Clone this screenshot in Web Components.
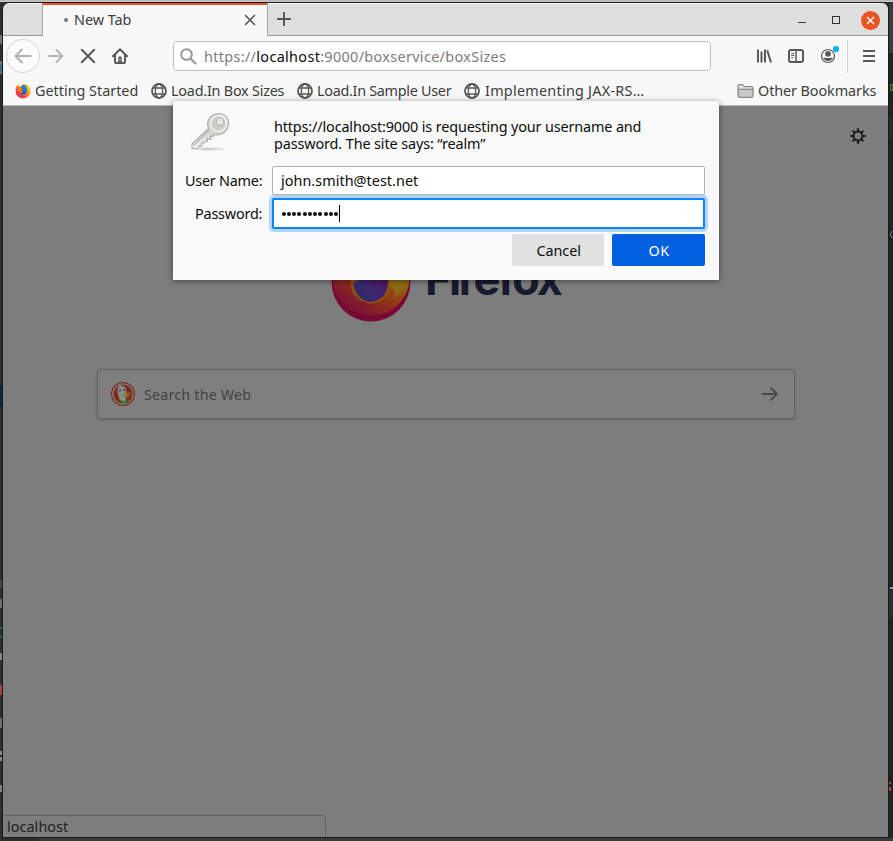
<!DOCTYPE html>
<html lang="en">
<head>
<meta charset="utf-8">
<title>New Tab</title>
<style>
html,body{margin:0;width:893px;height:841px;overflow:hidden;background:#2b2c2d}
body{font-family:"Noto Sans","Open Sans",sans-serif;font-size:14.4px;color:#3c3c3d}
</style>
</head>
<body>
<desktop-backdrop></desktop-backdrop>
<browser-window></browser-window>
<script>
function define(name, html, setup) {
  const tpl = document.createElement('template');
  tpl.innerHTML = html;
  customElements.define(name, class extends HTMLElement {
    constructor() { super(); this.attachShadow({mode: 'open'}).append(tpl.content.cloneNode(true)); }
    connectedCallback() { if (setup) setup(this, this.shadowRoot); }
  });
}

/* A single line of text whose tracking is tuned so it fills the width in "w". */
define('fit-text', `<style>:host{display:block;white-space:nowrap;line-height:20px;flex:none}span{display:inline-block}</style><span><slot></slot></span>`,
(el, root) => {
  const w = parseFloat(el.getAttribute('w')), span = root.querySelector('span');
  el.style.width = w + 'px';
  const n = el.textContent.length;
  span.style.letterSpacing = '0px';
  span.style.letterSpacing = ((w + .3 - span.getBoundingClientRect().width) / n) + 'px';
});

const ICONS = {
  back: [34,34,`<circle cx="17" cy="17" r="16.5" fill="#fbfbfb" stroke="#d3d3d3"/><path d="M24.5 17H10M16 10.500L9.500 17l6.500 6.500" stroke="#b1b1b1" stroke-width="2" fill="none" stroke-linecap="round" stroke-linejoin="round"/>`],
  forward: [16,16,`<path d="M1 8h13.500M8.500 2l6 6-6 6" stroke="#b3b3b3" stroke-width="2" fill="none" stroke-linecap="round" stroke-linejoin="round"/>`],
  stop: [16,16,`<path d="M1.800 1.800l12.400 12.400M14.200 1.800L1.800 14.200" stroke="#58585a" stroke-width="2" stroke-linecap="round"/>`],
  home: [16,16,`<path d="M1 8.300L8 1.300l7 7M3 7.500V14a1 1 0 0 0 1 1h8a1 1 0 0 0 1-1V7.500" stroke="#58585a" stroke-width="2" fill="none" stroke-linecap="round" stroke-linejoin="round"/><path d="M6.300 15V9.500a1 1 0 0 1 1-1h1.400a1 1 0 0 1 1 1V15z" fill="#58585a"/><rect x="7.500" y="11" width="1" height="1.300" fill="#fff"/>`],
  search: [17,17,`<circle cx="6.500" cy="6.500" r="5.300" stroke="#999" stroke-width="2" fill="none"/><path d="M10.500 10.500l5 5" stroke="#999" stroke-width="2.200" stroke-linecap="round"/>`],
  close: [12,12,`<path d="M1.500 1.500l9 9M10.500 1.500l-9 9" stroke="#58585a" stroke-width="1.700" stroke-linecap="round"/>`],
  plus: [14,14,`<path d="M7 .7v12.600M.7 7h12.600" stroke="#555" stroke-width="1.900" stroke-linecap="round"/>`],
  library: [16,16,`<path d="M2 1.500v13M5.500 3.500v11M9 1.500v13M11.200 2.200l3.800 12.300" stroke="#58585a" stroke-width="2" fill="none"/>`],
  sidebar: [16,16,`<rect x="1" y="2" width="14" height="12" rx="2" stroke="#58585a" stroke-width="2" fill="none"/><path d="M8 2v12" stroke="#58585a" stroke-width="1.500"/><path d="M3.300 5.500h3M3.300 7.500h3M3.300 9.500h2" stroke="#58585a"/>`],
  account: [22,20,`<circle cx="8" cy="11" r="6.500" stroke="#58585a" stroke-width="1.200" fill="none"/><circle cx="8" cy="8.800" r="2.900" fill="#58585a"/><path d="M3.300 12.200Q8 14 12.700 12.200Q12 15.700 8 16Q4 15.700 3.300 12.200z" fill="#58585a"/><circle cx="16" cy="4" r="3.100" fill="#00b3f4"/>`],
  menu: [12,12,`<path d="M0 1h12M0 6h12M0 11h12" stroke="#58585a" stroke-width="1.800"/>`],
  folder: [17,14,`<path d="M1 12.500V1.700Q1 .7 2 .7h4l1.500 2H15q1 0 1 1v8.800q0 .8-1 .8H2q-1 0-1-.8zM1 5.200h15" fill="#c9c9c9" stroke="#737373"/><path d="M2 2.200h4M2 4h13" stroke="#ededed"/>`],
  globe: [16,16,`<g fill="none" stroke="#58585a"><circle cx="8" cy="8" r="7" stroke-width="1.800"/><ellipse cx="8" cy="8" rx="3.700" ry="7" stroke-width="1.300"/><path d="M2 5h12M2 11h12" stroke-width="1.300"/></g>`],
  gear: [16,16,`<circle cx="8" cy="8" r="4.400" stroke="#1c1c1e" stroke-width="2" fill="none"/><path d="M8 .3v3.200M8 12.500v3.200M.3 8h3.200M12.500 8h3.200M2.600 2.600l2 2M11.400 11.400l2 2M13.400 2.600l-2 2M2.600 13.400l2-2" stroke="#1c1c1e" stroke-width="2"/>`],
  go: [16,16,`<path d="M0 8h14.500M8.500 1.500L15 8l-6.500 6.500" stroke="#484848" stroke-width="1.900" fill="none"/>`],
  foxmini: [16,16,`<defs><linearGradient id="m" x1=".9" y1="0" x2=".1" y2="1"><stop offset="0" stop-color="#fff13d"/><stop offset=".4" stop-color="#ff9a16"/><stop offset=".75" stop-color="#ff3647"/><stop offset="1" stop-color="#e31587"/></linearGradient></defs><path d="M.5 7Q.8 3.500 2.700 1.500L4 3.300Q5 2.700 6.200 3L8 .7Q14.500.5 15.500 7.500 15.500 15 8 15.500.8 15 .5 7z" fill="url(#m)"/><path d="M6 3.500Q8 .9 10.500 2.500 12.800 5 12 8.500 10.500 12.500 6.800 11.500 3.500 10 4.300 6.500L6.500 6z" fill="#0a84e0"/><path d="M4 5.700q3-1 4.800.7L7.500 8q1.500 1.800 4 .3-1 3-4.500 2.800Q3.800 10 4 5.700z" fill="#20439b"/><path d="M3.200 4l3.300 1.200 2 1-1.800 1.200q0 2 2.300 2-4 1.500-5.500-1.400z" fill="#ff7b1b"/>`],
  firefox: [80,80,`<defs><linearGradient id="f" x1=".85" y1=".1" x2=".2" y2=".95"><stop offset="0" stop-color="#8a7b16"/><stop offset=".35" stop-color="#96580f"/><stop offset=".65" stop-color="#8c2c1c"/><stop offset="1" stop-color="#780d3b"/></linearGradient><linearGradient id="p" x1="0" y1="1" x2="1" y2=".3"><stop offset="0" stop-color="#2b2565"/><stop offset=".55" stop-color="#392a70"/><stop offset="1" stop-color="#4c1668"/></linearGradient></defs><circle cx="40" cy="40" r="39.500" fill="#780936"/><path d="M1 33Q3 62 27 71q27 8 43-12Q79 49 78.500 33L60 5H18z" fill="url(#f)"/><path d="M20 38q-2 20 20 23.500Q60 61 60 38z" fill="#91500f"/><path d="M59 38h16q-1 10-11 16 2-8-6-10z" fill="#8c6c13"/><path d="M22 42Q27 37 32 38h25q0 20-17 22-14-1-18-18z" fill="url(#p)"/>`],
  duck: [26,26,`<circle cx="13" cy="13" r="12" fill="#77271a"/><circle cx="13" cy="13" r="10.200" fill="#7a2b1c" stroke="#878080" stroke-width="1.200"/><path d="M8 6q4-3 7 .5 2 2 1.500 6l-1 9q-3 1-4.500 0Q8 15 7.500 11z" fill="#898989"/><path d="M14 11.500q4.500 1.500 7-.5-.5 3-4.500 3l3.500 1.200q-3.500 2-6 .5z" fill="#8b7814"/><path d="M10.500 19l4.500 1.500 3.500-1.500v3.500l-3.500-1-4.500 1z" fill="#2b7525"/><circle cx="10" cy="9.500" r=".9" fill="#333a58"/><circle cx="14.300" cy="9" r=".9" fill="#333a58"/>`],
  key: [42,42,`<defs><linearGradient id="k" x1="1" y1="0" x2="0" y2="1"><stop offset="0" stop-color="#f0f0ee"/><stop offset=".5" stop-color="#d5d5d0"/><stop offset="1" stop-color="#f2f2f0"/></linearGradient><radialGradient id="s"><stop offset="0" stop-color="#bbb"/><stop offset="1" stop-color="#bbb" stop-opacity="0"/></radialGradient></defs><ellipse cx="18" cy="37" rx="19" ry="2" fill="url(#s)"/><path d="M2 36.500V32L18.500 16.500Q16 9 21 4.500 26 .5 32 2q7 2.500 6.500 10-1 8-7.500 10-4 1.500-8 .5l.5 2-3-.5.5 3.500-4-1 .5 3-3 .5-2.500 1.500-.5 3-3-.2-.5 2z" fill="url(#k)" stroke="#a8a8a4" stroke-width="1.100" stroke-linejoin="round"/><path d="M3.500 33.500L19.500 18" stroke="#999" stroke-width="1"/><circle cx="28.500" cy="11.500" r="7.800" fill="#cfcfca" stroke="#fff" stroke-width="1"/><path d="M23 8l8 9M25 6l8 9M22 12l6 6" stroke="#bcbcb8" stroke-width=".8"/><circle cx="30" cy="9.500" r="3.600" fill="#fbfbfb" stroke="#b3b3b0" stroke-width="1.200"/><circle cx="30" cy="9.500" r="1.700" fill="#eee" stroke="#bbb" stroke-width=".6"/>`]
};
define('ui-icon', `<style>:host{display:block;flex:none;line-height:0}svg{display:block}</style><div></div>`, (el, root) => {
  const [w, h, body] = ICONS[el.getAttribute('name')];
  root.querySelector('div').innerHTML = `<svg width="${w}" height="${h}" viewBox="0 0 ${w} ${h}">${body}</svg>`;
});

/* Slivers of the editor window that show behind the browser. */
define('desktop-backdrop', `<style>
:host{position:absolute;inset:0;background:linear-gradient(#b9b9b9 0 1px,#c7c7c7 1px 2px,#2c2e30 2px)}
i{position:absolute;display:block}
.l{left:0;width:3px}.r{left:889px;width:4px}
</style>
<i class="r" style="top:4px;height:837px;background:#222424"></i>
<i class="r" style="top:4px;height:49px;background:#3a3b3c"></i>
<i class="r" style="top:80px;height:20px;background:#1b2623"></i>
<i class="r" style="top:118px;height:22px;background:#2a2b2c"></i>
<i class="r" style="top:590px;height:27px;background:#2c2f31"></i>
<i style="left:890px;width:3px;top:587px;height:2px;background:#8fa0ac"></i>
<i style="left:890px;width:3px;top:84px;height:7px;border:1px solid #56773c;box-sizing:border-box"></i>
<i style="left:890px;width:4px;top:231px;height:7px;border:1px solid #687a92;border-radius:3px 0 0 3px;box-sizing:border-box"></i>
<i style="left:889px;width:2px;top:782px;height:2px;background:#a64840"></i>
<i style="left:889px;width:2px;top:787px;height:4px;background:#a64840"></i>
<i class="l" style="top:35px;height:9px;background:#77736c"></i>
<i class="l" style="top:61px;height:13px;background:#6f7070"></i>
<i class="l" style="top:65px;height:7px;background:#347089"></i>
<i class="l" style="top:385px;height:22px;background:#0b263d"></i>
<i class="l" style="top:580px;height:8px;background:#484848"></i>
<i class="l" style="top:599px;height:9px;background:#706e69"></i>
<i class="l" style="top:627px;height:2px;background:#297437"></i>
<i class="l" style="top:636px;height:2px;background:#297437"></i>
<i class="l" style="top:653px;height:7px;background:#878787"></i>
<i class="l" style="top:685px;height:10px;background:#a24542"></i>
<i class="l" style="top:718px;height:10px;background:#6d7069"></i>
<i class="l" style="top:751px;height:4px;background:#8a8b8c"></i>
<i class="l" style="top:757px;height:4px;background:#8a8b8c"></i>
<i class="l" style="top:785px;height:7px;background:#858585"></i>
<i style="left:0;width:893px;top:838px;height:3px;background:#393a3b"></i>
<i style="left:0;width:39px;top:838px;height:3px;background:#2b2d2f"></i>`);

define('tab-strip', `<style>
:host{display:flex;height:33px;box-sizing:border-box;background:linear-gradient(#f7f7f7 0 1px,#dedede 1px 32px,#999 32px);color:#3c3c3d}
.tab{margin-left:39px;width:226px;box-sizing:border-box;border:solid #a6a6a6;border-width:0 1px;background:linear-gradient(#e95420 0 2px,#f8f8f8 2px);display:flex;align-items:center;padding-left:20px}
.dot{width:4px;height:4px;border-radius:50%;background:#777;margin:1px 6px 0 1px}
fit-text{margin-top:1px}ui-icon.x{margin-left:113px}
.new{margin:9px 0 0 9px}.sp{flex:1}
.ctl{display:flex;align-items:center;padding-right:8px}
.min{width:8px;height:1px;background:#3c3c3c;margin:5px 26px 0 0}
.max{width:8px;height:8px;box-sizing:border-box;border:1px solid #333;margin-right:21px}
.cl{width:19px;height:19px;border-radius:50%;background:#e95420;display:grid;place-items:center;margin-top:1px}
</style>
<div class="tab"><span class="dot"></span><fit-text w="57">New Tab</fit-text><ui-icon class="x" name="close"></ui-icon></div>
<ui-icon class="new" name="plus"></ui-icon><span class="sp"></span>
<div class="ctl"><span class="min"></span><span class="max"></span><span class="cl"><svg width="9" height="9"><path d="M1 1l7 7M8 1l-7 7" stroke="#fff" stroke-width="1.500"/></svg></span></div>`);

define('nav-bar', `<style>
:host{display:flex;height:40px;align-items:center;background:#f8f8f8;padding:0 13px 0 3px;box-sizing:border-box}
.url{margin-left:45px;width:538px;height:30px;box-sizing:border-box;border:1px solid #bdbdbd;border-radius:4px;background:#fff;display:flex;align-items:center;padding-left:6px;color:#7b7b7d}
.url fit-text{margin-left:7px;margin-top:1px}b{font-weight:400;color:#0b0b0c}
.sep{width:1px;height:33px;background:#d5d5d5;margin:0 15px 0 5px}
</style>
<ui-icon name="back"></ui-icon><ui-icon name="forward" style="margin-left:8px"></ui-icon><ui-icon name="stop" style="margin-left:16px"></ui-icon><ui-icon name="home" style="margin-left:16px"></ui-icon>
<div class="url"><ui-icon name="search"></ui-icon><fit-text w="302">https://<b>localhost</b>:9000/boxservice/boxSizes</fit-text></div>
<ui-icon name="library" style="margin-left:45px"></ui-icon><ui-icon name="sidebar" style="margin-left:16px"></ui-icon><ui-icon name="account" style="margin:-2px 0 0 16px"></ui-icon><span class="sep"></span><ui-icon name="menu"></ui-icon>`);

define('bookmark-item', `<style>:host{display:flex;align-items:center;flex:none}</style>`, (el, root) => {
  const icon = document.createElement('ui-icon'), text = document.createElement('fit-text');
  icon.setAttribute('name', el.getAttribute('icon'));
  text.setAttribute('w', el.getAttribute('w'));
  text.textContent = el.getAttribute('label');
  text.style.marginLeft = (el.getAttribute('gap') || 4) + 'px';
  root.append(icon, text);
});

define('bookmark-bar', `<style>
:host{display:flex;align-items:center;height:30px;box-sizing:border-box;background:linear-gradient(#f8f8f8 0 29px,#bbb 29px);padding:0 12px 1px 12px}
bookmark-item{margin-right:13px}bookmark-item:last-child{margin:0 0 0 auto}
</style>
<bookmark-item icon="foxmini" label="Getting Started" w="103"></bookmark-item>
<bookmark-item icon="globe" label="Load.In Box Sizes" w="113"></bookmark-item>
<bookmark-item icon="globe" label="Load.In Sample User" w="134"></bookmark-item>
<bookmark-item icon="globe" label="Implementing JAX-RS…" w="159" gap="5"></bookmark-item>
<bookmark-item icon="folder" label="Other Bookmarks" w="118"></bookmark-item>`);

define('new-tab-page', `<style>
:host{display:flex;flex-direction:column;flex:1;background:#7d7d7d;position:relative}
.gear{align-self:flex-end;margin:22px 22px 0 0}
.brand{display:flex;margin:98px 0 0 328px;height:80px}
.name{font:700 45px/56px Inter,sans-serif;color:#181a2e;margin:9px 0 0 14px}
.search{margin:47px 0 0 94px;width:698px;height:50px;box-sizing:border-box;border:1px solid #646464;border-radius:4px;background:#7f7f7f;box-shadow:0 1px 3px #0003;display:flex;align-items:center;padding:0 16px 0 12px;color:#434343}
.search fit-text{margin:2px auto 0 8px}
.status{margin-top:auto;width:323px;height:22px;box-sizing:border-box;border:solid #626262;border-width:1px 1px 0 0;border-radius:0 4px 0 0;padding:1px 4px;color:#202020}
</style>
<ui-icon class="gear" name="gear"></ui-icon>
<div class="brand"><ui-icon name="firefox"></ui-icon><fit-text class="name" w="135">Firefox</fit-text></div>
<div class="search"><ui-icon name="duck"></ui-icon><fit-text w="107">Search the Web</fit-text><ui-icon name="go"></ui-icon></div>
<div class="status"><fit-text w="61">localhost</fit-text></div>`);

define('auth-dialog', `<style>
:host{position:absolute;left:170px;top:98px;width:546px;height:179px;box-sizing:border-box;background:#f9f9fa;box-shadow:0 1px 6px #0007;padding:10px 14px 14px 12px;color:#0c0c0d;display:block}
.top{display:flex;height:55px}.top ui-icon{margin:1px 0 0 5px}
.msg{margin:7px 0 0 42px}.msg fit-text{line-height:17px}
.row{display:grid;grid-template-columns:78px 433px;column-gap:9px;align-items:center;justify-items:end}
.row>fit-text{margin-right:1px}
.row>div{box-sizing:border-box;width:433px;background:#fff;border:1px solid #b1b1b1;border-radius:2px;height:29px;display:flex;align-items:center;padding:1px 8px 0}
.row .pw{height:31px;border:2px solid #0a84ff;box-shadow:0 0 0 3px #b2d5fb;padding:0 7px}
.pw b{width:4px;height:4px;border-radius:50%;background:#0c0c0d;margin:0 .64px}
.pw i{width:1px;height:17px;background:#000}
.btns{display:flex;justify-content:flex-end;gap:8px;margin-top:5px}
.btns div{height:32px;border-radius:2px;display:grid;place-items:center;background:#e1e1e1;width:92px}
.btns .ok{background:#0060df;color:#fff;width:93px}.btns fit-text{margin:1px 0 0 1px}
</style>
<div class="top"><ui-icon name="key"></ui-icon><div class="msg"><fit-text w="367">https://localhost:9000 is requesting your username and</fit-text><fit-text w="211">password. The site says: “realm”</fit-text></div></div>
<div class="row"><fit-text w="77">User Name:</fit-text><div><fit-text w="137">john.smith@test.net</fit-text></div></div>
<div class="row" style="margin-top:3px"><fit-text w="67">Password:</fit-text><div class="pw"><b></b><b></b><b></b><b></b><b></b><b></b><b></b><b></b><b></b><b></b><b></b><i></i></div></div>
<div class="btns"><div><fit-text w="44">Cancel</fit-text></div><div class="ok"><fit-text w="21">OK</fit-text></div></div>`);

define('browser-window', `<style>
:host{position:absolute;left:3px;top:3px;width:885px;height:834px;display:flex;flex-direction:column;box-shadow:0 0 0 1px #191a1b;border-radius:6px 6px 0 0}
tab-strip{border-radius:6px 6px 0 0}
</style><tab-strip></tab-strip><nav-bar></nav-bar><bookmark-bar></bookmark-bar><new-tab-page></new-tab-page><auth-dialog></auth-dialog>`);
</script>
</body>
</html>
